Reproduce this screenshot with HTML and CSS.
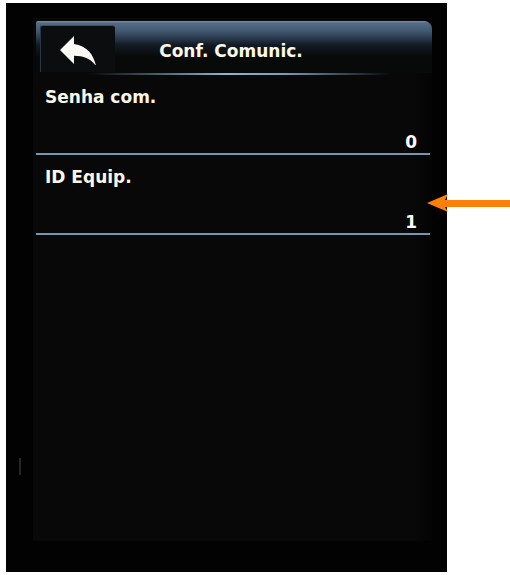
FILE: index.html
```html
<!DOCTYPE html>
<html lang="pt">
<head>
    <meta charset="UTF-8">
    <meta name="viewport" content="width=device-width, initial-scale=1.0">
    <title>Conf. Comunic.</title>
    <link rel="stylesheet" href="styles.css">
</head>
<body>

    <div class="aparelho">
        <div class="tela">
            <div class="cabecalho">
                <div class="voltar">
                    <svg width="40" height="30" viewBox="2.5 4.5 19 15">
                        <path d="M10 9V5l-7 7 7 7v-4.1c5 0 8.5 1.6 11 5.1-1-5-4-10-11-11z" fill="#fbfbf6"/>
                    </svg>
                </div>
                <div class="titulo">Conf. Comunic.</div>
            </div>
            <div class="brilho"></div>

            <div class="linha">
                <div class="rotulo">Senha com.</div>
                <div class="valor">0</div>
            </div>
            <div class="linha">
                <div class="rotulo">ID Equip.</div>
                <div class="valor">1</div>
            </div>
        </div>
        <div class="sensor"></div>
    </div>

    <!-- seta de destaque sobre o campo ID Equip. -->
    <svg class="seta" width="84" height="22" viewBox="0 0 84 22">
        <polygon points="0,10 21,1 18,7 84,7 84,14 18,14 21,19" fill="#fb7f0a"/>
    </svg>

</body>
</html>
```

FILE: styles.css
```css
body {
    margin: 0;
    background-color: #fff;
    font-family: "DejaVu Sans", Verdana, sans-serif;
}
.aparelho {
    position: relative;
    width: 441px;
    height: 569px;
    margin: 3px 0 0 6px;
    padding: 15px 0 0 27px;
    box-sizing: border-box;
    background-color: #020202;
}
.tela {
    width: 399px;
    height: 523px;
    padding-top: 3px;
    box-sizing: border-box;
    background: linear-gradient(to right, #080808 0, #080808 95%, #040404 100%);
}
.cabecalho {
    display: flex;
    height: 52px;
    margin-left: 3px;
    border-radius: 2px 8px 0 0;
    background: linear-gradient(to bottom, #7d93ab 0, #546c86 2px, #415870 10px, #2a3a4c 17px, #121a22 24px, #080909 36px);
}
.voltar {
    display: flex;
    align-items: center;
    justify-content: center;
    width: 75px;
    margin: 4px 0 1px 4px;
    padding-top: 2px;
    box-sizing: border-box;
    background-color: #0c0d0f;
    border-top: 1px solid #3b5169;
    border-left: 1px solid #263848;
    border-radius: 3px 3px 0 0;
}
.titulo {
    flex: 1;
    padding: 20px 85px 0 0;
    text-align: center;
    color: #fbf7e8;
    font-size: 17px;
    font-weight: bold;
    line-height: 20px;
}
.brilho {
    height: 2px;
    margin-left: 57px;
    width: 300px;
    background: linear-gradient(to right, rgba(120, 150, 180, 0), #93b3cf 45%, #7d9bb8 65%, rgba(120, 150, 180, 0));
}
.linha {
    width: 394px;
    margin-left: 3px;
    padding: 12px 13px 1px 9px;
    box-sizing: border-box;
    border-bottom: 2px solid #7c94ad;
    color: #fbf7e8;
    font-size: 17px;
    font-weight: bold;
    line-height: 20px;
}
.valor {
    margin-top: 25px;
    text-align: right;
    color: #fdfdf8;
}
.sensor {
    position: absolute;
    left: 13px;
    top: 455px;
    width: 2px;
    height: 17px;
    background-color: #262626;
}
.seta {
    position: absolute;
    left: 427px;
    top: 193px;
}
```
